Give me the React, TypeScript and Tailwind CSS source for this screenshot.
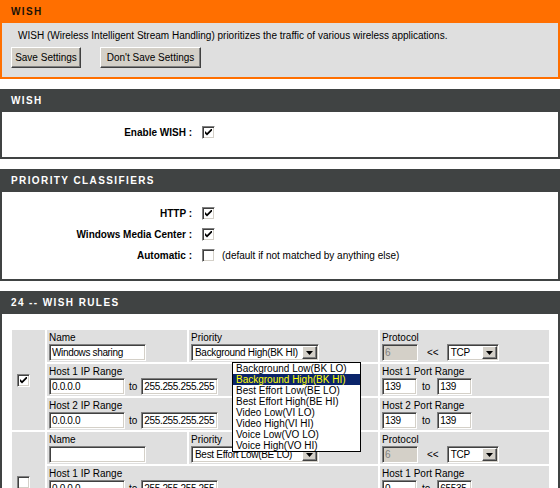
import type { ReactNode } from "react";

// classic 3D bevels
const SUNKEN =
  "border border-t-[#808080] border-l-[#808080] border-b-white border-r-white shadow-[inset_1px_1px_0_#404040,inset_-1px_-1px_0_#d4d0c8]";
const RAISED =
  "border border-t-white border-l-white border-b-[#404040] border-r-[#404040] shadow-[inset_-1px_-1px_0_#808080]";

const BOLD = "font-bold text-[10px]";

const PRIORITIES = [
  "Background Low(BK LO)",
  "Background High(BK HI)",
  "Best Effort Low(BE LO)",
  "Best Effort High(BE HI)",
  "Video Low(VI LO)",
  "Video High(VI HI)",
  "Voice Low(VO LO)",
  "Voice High(VO HI)",
];

type Rule = {
  on: boolean;
  name: string;
  priority: string;
  host1: [string, string];
  host2: [string, string];
  port1: [string, string];
  port2: [string, string];
};

const RULES: Rule[] = [
  {
    on: true,
    name: "Windows sharing",
    priority: "Background High(BK HI)",
    host1: ["0.0.0.0", "255.255.255.255"],
    port1: ["139", "139"],
    host2: ["0.0.0.0", "255.255.255.255"],
    port2: ["139", "139"],
  },
  {
    on: false,
    name: "",
    priority: "Best Effort Low(BE LO)",
    host1: ["0.0.0.0", "255.255.255.255"],
    port1: ["0", "65535"],
    host2: ["0.0.0.0", "255.255.255.255"],
    port2: ["0", "65535"],
  },
];

function Check({ on, className = "" }: { on: boolean; className?: string }) {
  return (
    <span className={`${SUNKEN} inline-flex h-[13px] w-[13px] shrink-0 items-center justify-center bg-white ${className}`}>
      {on && (
        <svg width="7" height="7" viewBox="0 0 7 7">
          <polygon points="0,2 2,4 7,-1 7,1.5 2,6.5 0,4.5" fill="#000" />
        </svg>
      )}
    </span>
  );
}

function TextBox({ value, className, disabled }: { value: string; className: string; disabled?: boolean }) {
  return (
    <input
      readOnly
      defaultValue={value}
      className={`${SUNKEN} h-[17px] px-[2px] tracking-[-0.35px] outline-none ${
        disabled ? "bg-[#d4d0c8] text-[#808080]" : "bg-white text-black"
      } ${className}`}
    />
  );
}

function Arrow() {
  return (
    <span className={`${RAISED} flex h-[13px] w-[15px] shrink-0 items-center justify-center bg-[#d4d0c8]`}>
      <svg width="7" height="4" viewBox="0 0 7 4">
        <path d="M0 0h7L3.5 4z" fill="#000" />
      </svg>
    </span>
  );
}

function Select({ value, className }: { value: string; className: string }) {
  return (
    <div className={`${SUNKEN} flex h-[17px] items-center justify-between bg-white pl-[3px] pr-[1px] ${className}`}>
      <span className="whitespace-nowrap leading-[13px] tracking-[-0.3px]">{value}</span>
      <Arrow />
    </div>
  );
}

function Section({
  title,
  orange,
  body,
  children,
}: {
  title: string;
  orange?: boolean;
  body: string;
  children: ReactNode;
}) {
  return (
    <section>
      <div
        className={`flex h-[23px] items-center pl-[11px] text-[10px] font-bold tracking-[1.4px] ${
          orange ? "bg-[#ff6f00] text-[#1a1208]" : "bg-[#404343] text-white"
        }`}
      >
        {title}
      </div>
      <div className={`border-2 border-t-0 ${orange ? "border-[#ff6f00] bg-[#dfdfdf]" : "border-[#404343] bg-white"} ${body}`}>
        {children}
      </div>
    </section>
  );
}

function Option({ label, on, note }: { label: string; on: boolean; note?: string }) {
  return (
    <div className="flex h-[13px] items-center">
      <span className={`${BOLD} w-[190px] text-right`}>{label}</span>
      <Check on={on} className="ml-[10px]" />
      {note && <span className="ml-[7px]">{note}</span>}
    </div>
  );
}

function Cell({ label, children, className = "" }: { label: string; children: ReactNode; className?: string }) {
  return (
    <div className={`bg-[#dfdfdf] pl-[2px] pt-[2px] ${className}`}>
      <div className="leading-[12px]">{label}</div>
      <div className="flex items-center">{children}</div>
    </div>
  );
}

function IpRange({ label, range }: { label: string; range: [string, string] }) {
  return (
    <Cell label={label} className="col-span-2">
      <TextBox value={range[0]} className="w-[76px]" />
      <span className="ml-[4px] mr-[4px]">to</span>
      <TextBox value={range[1]} className="w-[77px]" />
    </Cell>
  );
}

function PortRange({ label, range }: { label: string; range: [string, string] }) {
  return (
    <Cell label={label}>
      <TextBox value={range[0]} className="w-[35px]" />
      <span className="ml-[5px] mr-[7px]">to</span>
      <TextBox value={range[1]} className="w-[35px]" />
    </Cell>
  );
}

function RuleRows({ rule }: { rule: Rule }) {
  return (
    <>
      <div className="row-span-3 flex items-center bg-[#dfdfdf] pl-[5px]">
        <Check on={rule.on} />
      </div>
      <Cell label="Name">
        <TextBox value={rule.name} className="w-[97px]" />
      </Cell>
      <Cell label="Priority">
        <Select value={rule.priority} className="w-[128px]" />
      </Cell>
      <Cell label="Protocol">
        <TextBox value="6" disabled className="w-[36px]" />
        <span className="ml-[9px] mr-[8px]">&lt;&lt;</span>
        <Select value="TCP" className="w-[52px]" />
      </Cell>
      <IpRange label="Host 1 IP Range" range={rule.host1} />
      <PortRange label="Host 1 Port Range" range={rule.port1} />
      <IpRange label="Host 2 IP Range" range={rule.host2} />
      <PortRange label="Host 2 Port Range" range={rule.port2} />
    </>
  );
}

export default function App() {
  return (
    <div className="relative w-[560px] bg-white font-['Liberation_Sans',Arial,sans-serif] text-[10px] text-black">
      <Section title="WISH" orange body="h-[56px]">
        <p className="pl-[16px] pt-[6px] leading-[13px]">
          WISH (Wireless Intelligent Stream Handling) prioritizes the traffic of various wireless applications.
        </p>
        <div className="mt-[5px] flex gap-[19px] pl-[9px]">
          <button className={`${RAISED} h-[21px] w-[70px] bg-[#d4d0c8]`}>Save Settings</button>
          <button className={`${RAISED} h-[21px] w-[101px] bg-[#d4d0c8]`}>Don't Save Settings</button>
        </div>
      </Section>

      <div className="mt-[10px]">
        <Section title="WISH" body="h-[47px] pt-[14px]">
          <Option label="Enable WISH :" on />
        </Section>
      </div>

      <div className="mt-[10px]">
        <Section title="PRIORITY CLASSIFIERS" body="h-[89px] pt-[15px] flex flex-col gap-[8px]">
          <Option label="HTTP :" on />
          <Option label="Windows Media Center :" on />
          <Option label="Automatic :" on={false} note="(default if not matched by anything else)" />
        </Section>
      </div>

      <div className="mt-[10px]">
        <Section title="24 -- WISH RULES" body="pl-[10px] pt-[16px] pb-[16px]">
          <div className="grid w-[537px] grid-cols-[33px_140px_189px_169px] auto-rows-[32px] gap-[2px] bg-white">
            {RULES.map((r, i) => (
              <RuleRows key={i} rule={r} />
            ))}
          </div>
        </Section>
      </div>

      {/* open list of the first rule's priority select */}
      <ul className="absolute left-[232px] top-[362px] w-[129px] border border-black bg-white">
        {PRIORITIES.map((p) => (
          <li
            key={p}
            className={`h-[11px] whitespace-nowrap pl-[3px] leading-[11px] ${
              p === RULES[0].priority ? "bg-[#0a246a] text-[#ffff00]" : ""
            }`}
          >
            {p}
          </li>
        ))}
      </ul>
    </div>
  );
}
